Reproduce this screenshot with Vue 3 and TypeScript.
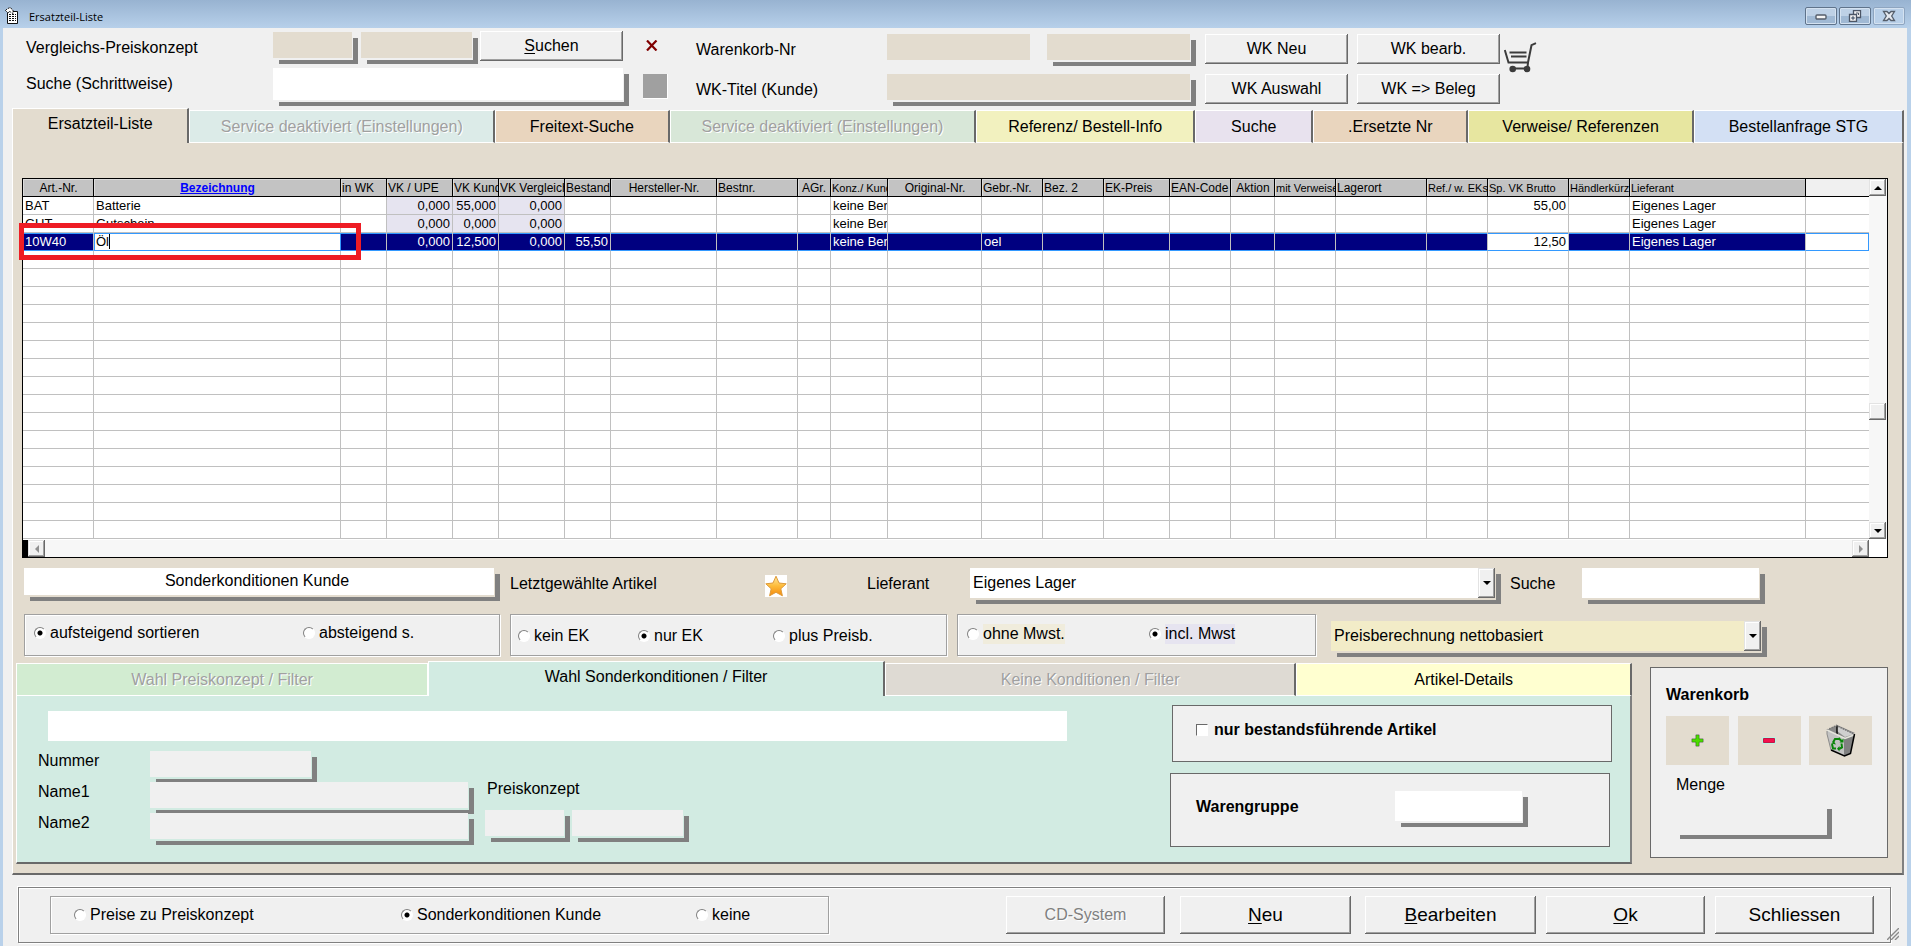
<script setup lang="ts">
import { ref } from 'vue'

interface Tab {
  label: string
  share: number
  tone: string
  disabled?: boolean
  active?: boolean
}

interface Column {
  key: string
  label: string
  width: number
  align?: 'center' | 'right' | 'left'
  cell?: 'right' | 'left'
  small?: boolean
  tint?: boolean
}

type Row = Record<string, string>

const mainTabs: Tab[] = [
  { label: 'Ersatzteil-Liste', share: 177, tone: 'sand', active: true },
  { label: 'Service deaktiviert (Einstellungen)', share: 307, tone: 'aqua', disabled: true },
  { label: 'Freitext-Suche', share: 174, tone: 'peach' },
  { label: 'Service deaktiviert (Einstellungen)', share: 308, tone: 'sage', disabled: true },
  { label: 'Referenz/ Bestell-Info', share: 219, tone: 'lemon' },
  { label: 'Suche', share: 117, tone: 'lilac' },
  { label: '.Ersetzte Nr', share: 154, tone: 'peach' },
  { label: 'Verweise/ Referenzen', share: 226, tone: 'olive' },
  { label: 'Bestellanfrage STG', share: 210, tone: 'sky' },
]

const filterTabs: Tab[] = [
  { label: 'Wahl Preiskonzept / Filter', share: 413, tone: 'green', disabled: true },
  { label: 'Wahl Sonderkonditionen / Filter', share: 457, tone: 'mint', active: true },
  { label: 'Keine Konditionen / Filter', share: 411, tone: 'grey', disabled: true },
  { label: 'Artikel-Details', share: 335, tone: 'yellow' },
]

const columns: Column[] = [
  { key: 'artnr', label: 'Art.-Nr.', width: 71, align: 'center' },
  { key: 'bez', label: 'Bezeichnung', width: 247, align: 'center' },
  { key: 'wk', label: 'in WK', width: 46 },
  { key: 'upe', label: 'VK / UPE', width: 66, cell: 'right', tint: true },
  { key: 'kunde', label: 'VK Kunde', width: 46, cell: 'right', tint: true },
  { key: 'vergl', label: 'VK Vergleich', width: 66, cell: 'right', tint: true },
  { key: 'bestand', label: 'Bestand', width: 46, cell: 'right' },
  { key: 'herst', label: 'Hersteller-Nr.', width: 106, align: 'center' },
  { key: 'bestnr', label: 'Bestnr.', width: 81 },
  { key: 'agr', label: 'AGr.', width: 33, align: 'right' },
  { key: 'konz', label: 'Konz./ Kunde', width: 57, small: true },
  { key: 'orig', label: 'Original-Nr.', width: 94, align: 'center' },
  { key: 'gebr', label: 'Gebr.-Nr.', width: 61 },
  { key: 'bez2', label: 'Bez. 2', width: 61 },
  { key: 'ek', label: 'EK-Preis', width: 66 },
  { key: 'ean', label: 'EAN-Code', width: 61 },
  { key: 'aktion', label: 'Aktion', width: 44, align: 'center' },
  { key: 'verw', label: 'mit Verweisen', width: 61, small: true },
  { key: 'ort', label: 'Lagerort', width: 91 },
  { key: 'ref', label: 'Ref./ w. EKs', width: 61, small: true },
  { key: 'brutto', label: 'Sp. VK Brutto', width: 81, cell: 'right', small: true },
  { key: 'haendler', label: 'Händlerkürzel', width: 61, small: true },
  { key: 'lief', label: 'Lieferant', width: 176, small: true },
]

const rows: Row[] = [
  { artnr: 'BAT', bez: 'Batterie', upe: '0,000', kunde: '55,000', vergl: '0,000', konz: 'keine Ber', brutto: '55,00', lief: 'Eigenes Lager' },
  { artnr: 'GUT', bez: 'Gutschein', upe: '0,000', kunde: '0,000', vergl: '0,000', konz: 'keine Ber', lief: 'Eigenes Lager' },
  { artnr: '10W40', bez: 'Öl', upe: '0,000', kunde: '12,500', vergl: '0,000', bestand: '55,50', konz: 'keine Ber', gebr: 'oel', brutto: '12,50', lief: 'Eigenes Lager' },
]
const selectedRow = 2
const emptyRows = 16

const editText = ref('Öl')
const sortOrder = ref('auf')
const ekMode = ref('nur')
const mwst = ref('incl')
const priceMode = ref('sonder')
const stockOnly = ref(false)
</script>

<template>
  <div class="window">
    <header class="titlebar">
      <svg class="app-icon" width="14" height="18" viewBox="0 0 14 18" aria-hidden="true">
        <path d="M2.500 5.500V4.500h10v12h-10z" fill="#fff" stroke="#111" />
        <path d="M4 7.500h7M4 9.500h7M4 11.500h7M4 13.500h7" stroke="#111" stroke-dasharray="2 1" />
        <path d="M.5 3.500 2 2l3-1.500L8 3v3.500L5.500 5 4 4.500 3 6z" fill="#fff" stroke="#111" stroke-dasharray="2 1" />
      </svg>
      <h1>Ersatzteil-Liste</h1>
      <div class="caption">
        <button type="button" aria-label="Minimieren">
          <svg width="14" height="12" viewBox="0 0 14 12"><rect x="2" y="5" width="10" height="4" rx="1" fill="#f4f4f4" stroke="#555e6b" stroke-width="1.400" /></svg>
        </button>
        <button type="button" aria-label="Wiederherstellen">
          <svg width="14" height="12" viewBox="0 0 14 12"><path d="M5.500.500h7v7h-7z" fill="#f4f4f4" stroke="#4c5666" stroke-width="1.300" /><path d="M8 3h2.500v2" fill="none" stroke="#4c5666" /><path d="M1.500 4.500h7v7h-7z" fill="#f4f4f4" stroke="#4c5666" stroke-width="1.300" /><path d="M4 7h2v2H4z" fill="#9db5cf" stroke="#4c5666" /></svg>
        </button>
        <button type="button" class="pale" aria-label="Fenster schließen">
          <svg width="14" height="12" viewBox="0 0 14 12"><path d="M1.500 1.500h3.500l2 2 2-2h3.500L9.700 6l2.800 4.500H9l-2-2-2 2H1.500L4.300 6z" fill="#e4e8ee" stroke="#555e6b" stroke-width="1.300" /></svg>
        </button>
      </div>
    </header>

    <main class="client">
      <section class="top">
        <div class="top-labels first">
          <label for="vpk">Vergleichs-Preiskonzept</label>
          <label for="step">Suche (Schrittweise)</label>
        </div>
        <div class="search-block">
          <div class="line">
            <input id="vpk" class="field sand w79" />
            <input class="field sand w111" aria-label="Bezeichnung Preiskonzept" />
            <button type="button" class="btn w143"><span><u>S</u>uchen</span></button>
          </div>
          <input id="step" class="field white tall" />
        </div>
        <div class="marks">
          <button type="button" class="clear" aria-label="Leeren">
            <svg width="12" height="11" viewBox="0 0 12 11"><path d="M1 0.500 10.500 10.500M10.500 0.500 1 10.500" stroke="#800000" stroke-width="2.200" /></svg>
          </button>
          <button type="button" class="swatch" aria-label="Anzeige"></button>
        </div>
        <div class="top-labels second">
          <label for="wknr">Warenkorb-Nr</label>
          <label for="wktitel">WK-Titel (Kunde)</label>
        </div>
        <div class="basket-fields">
          <div class="line">
            <input id="wknr" class="field sand flat w143" />
            <input class="field sand w143" aria-label="Warenkorb-Datum" />
          </div>
          <input id="wktitel" class="field sand wide" />
        </div>
        <div class="basket-buttons">
          <button type="button" class="btn">WK Neu</button>
          <button type="button" class="btn">WK bearb.</button>
          <button type="button" class="btn">WK Auswahl</button>
          <button type="button" class="btn">WK =&gt; Beleg</button>
        </div>
        <svg class="cart" width="33" height="31" viewBox="0 0 33 31" role="img" aria-label="Warenkorb">
          <path d="M.8 8 4.500 20.500H25M32 1.200l-4.500 2L24 20.500l-.500 5" fill="none" stroke="#3b3b3b" stroke-width="2" />
          <path d="M5.500 10.500h17M7 14.500h15.500M8 26.500h16" stroke="#3b3b3b" stroke-width="1.800" />
          <circle cx="8.700" cy="27" r="3.300" fill="#3b3b3b" /><circle cx="23" cy="27" r="3.300" fill="#3b3b3b" />
        </svg>
      </section>

      <nav class="tabs" role="tablist" aria-label="Ansichten">
        <button
          v-for="(t, i) in mainTabs"
          :key="i"
          type="button"
          role="tab"
          :class="['tab', t.tone, { active: t.active }]"
          :disabled="t.disabled"
          :aria-selected="!!t.active"
          :style="{ flexGrow: t.share }"
        >{{ t.label }}</button>
      </nav>

      <section class="page">
        <div class="grid">
          <div class="grid-body">
            <table>
              <colgroup>
                <col v-for="c in columns" :key="c.key" :style="{ width: c.width + 'px' }" />
                <col />
              </colgroup>
              <thead>
                <tr>
                  <th v-for="c in columns" :key="c.key" scope="col" :class="[c.align, { small: c.small }]">
                    <a v-if="c.key === 'bez'" href="#">{{ c.label }}</a>
                    <template v-else>{{ c.label }}</template>
                  </th>
                  <td class="rest"></td>
                </tr>
              </thead>
              <tbody>
                <tr v-for="(r, i) in rows" :key="r.artnr" :class="{ selected: i === selectedRow }">
                  <td
                    v-for="c in columns"
                    :key="c.key"
                    :class="[c.cell, { tint: c.tint, open: c.key === 'brutto', editing: i === selectedRow && c.key === 'bez' }]"
                  >
                    <span v-if="i === selectedRow && c.key === 'bez'" class="edit"><input v-model="editText" aria-label="Bezeichnung" /><i class="caret"></i></span>
                    <template v-else>{{ r[c.key] }}</template>
                  </td>
                  <td class="rest"></td>
                </tr>
                <tr v-for="n in emptyRows" :key="n">
                  <td v-for="c in columns" :key="c.key"></td>
                  <td class="rest"></td>
                </tr>
              </tbody>
            </table>
            <div class="vbar">
              <button type="button" class="sb" aria-label="Nach oben"><svg width="8" height="4" viewBox="0 0 8 4"><path d="M0 4 4 0l4 4z" /></svg></button>
              <span class="track-a"></span>
              <span class="sb thumb"></span>
              <span class="track-b"></span>
              <button type="button" class="sb" aria-label="Nach unten"><svg width="8" height="4" viewBox="0 0 8 4"><path d="M0 0h8L4 4z" /></svg></button>
            </div>
          </div>
          <div class="hbar">
            <span class="block"></span>
            <button type="button" class="sb dim" aria-label="Nach links"><svg width="4" height="8" viewBox="0 0 4 8"><path d="M4 0v8L0 4z" /></svg></button>
            <span class="track"></span>
            <button type="button" class="sb dim" aria-label="Nach rechts"><svg width="4" height="8" viewBox="0 0 4 8"><path d="M0 0v8l4-4z" /></svg></button>
            <span class="corner"></span>
          </div>
          <div class="highlight"></div>
        </div>

        <div class="row picks">
          <input class="field white center special" value="Sonderkonditionen Kunde" aria-label="Konditionen" />
          <span class="cap last">Letztgewählte Artikel</span>
          <button type="button" class="star" aria-label="Letztgewählte Artikel">
            <svg width="22" height="22" viewBox="0 0 22 22">
              <defs><linearGradient id="gold" x1="0" y1="0" x2="0" y2="1"><stop offset="0" stop-color="#ffe9a0" /><stop offset=".5" stop-color="#fdbb3a" /><stop offset="1" stop-color="#f58a0c" /></linearGradient></defs>
              <path d="M11 1.200 14 8l7.200.8-5.400 5 1.600 7L11 17.300 4.600 20.800l1.600-7L.8 8.800 8 8z" fill="url(#gold)" stroke="#dd9a3a" stroke-linejoin="round" />
            </svg>
          </button>
          <label class="cap supplier" for="lief">Lieferant</label>
          <div class="combo white">
            <select id="lief"><option>Eigenes Lager</option></select>
            <span class="sb arrow"><svg width="8" height="4" viewBox="0 0 8 4"><path d="M0 0h8L4 4z" /></svg></span>
          </div>
          <label class="cap find" for="suche2">Suche</label>
          <input id="suche2" class="field white tall30" />
        </div>

        <div class="row groups">
          <fieldset class="group g1">
            <label><input v-model="sortOrder" type="radio" name="sort" value="auf" />aufsteigend sortieren</label>
            <label><input v-model="sortOrder" type="radio" name="sort" value="ab" />absteigend s.</label>
          </fieldset>
          <fieldset class="group g2">
            <label><input v-model="ekMode" type="radio" name="ek" value="kein" />kein EK</label>
            <label><input v-model="ekMode" type="radio" name="ek" value="nur" />nur EK</label>
            <label><input v-model="ekMode" type="radio" name="ek" value="plus" />plus Preisb.</label>
          </fieldset>
          <fieldset class="group g3">
            <label><input v-model="mwst" type="radio" name="mwst" value="ohne" /><span class="cream">ohne Mwst.</span></label>
            <label><input v-model="mwst" type="radio" name="mwst" value="incl" /><span class="violet">incl. Mwst</span></label>
          </fieldset>
          <div class="combo straw">
            <select aria-label="Preisberechnung"><option>Preisberechnung nettobasiert</option></select>
            <span class="sb arrow"><svg width="8" height="4" viewBox="0 0 8 4"><path d="M0 0h8L4 4z" /></svg></span>
          </div>
        </div>

        <div class="lower">
          <section class="filter">
            <nav class="tabs" role="tablist" aria-label="Filter">
              <button
                v-for="t in filterTabs"
                :key="t.label"
                type="button"
                role="tab"
                :class="['tab', t.tone, { active: t.active }]"
                :disabled="t.disabled"
                :aria-selected="!!t.active"
                :style="{ flexGrow: t.share }"
              >{{ t.label }}</button>
            </nav>
            <div class="filter-page">
              <div class="filter-left">
                <input class="field white flat long" aria-label="Filter" />
                <div class="filter-columns">
                  <div class="customer">
                    <label for="nummer">Nummer</label><input id="nummer" class="field plain w161" />
                    <label for="name1">Name1</label><input id="name1" class="field plain w318" />
                    <label for="name2">Name2</label><input id="name2" class="field plain w318" />
                  </div>
                  <div class="concept">
                    <label for="pk">Preiskonzept</label>
                    <div class="line">
                      <input id="pk" class="field plain w79" />
                      <input class="field plain w111" aria-label="Name Preiskonzept" />
                    </div>
                  </div>
                </div>
              </div>
              <div class="filter-right">
                <div class="box stock">
                  <label><input v-model="stockOnly" type="checkbox" />nur bestandsführende Artikel</label>
                </div>
                <div class="box goods">
                  <label for="wgr">Warengruppe</label>
                  <input id="wgr" class="field white w127" />
                </div>
              </div>
            </div>
          </section>

          <aside class="box basket">
            <h2>Warenkorb</h2>
            <div class="tools">
              <button type="button" aria-label="Hinzufügen">
                <svg width="13" height="13" viewBox="0 0 13 13"><path d="M4.500.500h4v4h4v4h-4v4h-4v-4h-4v-4h4z" fill="#4cdc00" stroke="#e6b5ec" /><path d="M5 1h3v4h4v3H8v4H5V8H1V5h4z" fill="#4cdc00" stroke="#3a9d0c" stroke-width=".8" /></svg>
              </button>
              <button type="button" aria-label="Entfernen">
                <svg width="14" height="7" viewBox="0 0 14 7"><path d="M0 0h14v7H0z" fill="#b9f3e2" /><path d="M1.500 1.500h11v4h-11z" fill="#f5104c" stroke="#c01848" /></svg>
              </button>
              <button type="button" aria-label="Warenkorb leeren">
                <svg width="30" height="33" viewBox="0 0 30 33">
                  <path d="M1 5v4l4 17 14 6V13z" fill="#c3c3c3" />
                  <path d="m18 14 11-4-5 20-6 2z" fill="#808080" />
                  <path d="M1 6 11 1l18 8-10 5z" fill="#8a8a8a" />
                  <path d="m11 2 17 8-9 3-8-6z" fill="#cfcfcf" />
                  <path d="M11 1.500v9" stroke="#000" stroke-width="1.400" />
                  <path d="m1 6 9.500-4.500L28 10" fill="none" stroke="#777" stroke-width="1.600" stroke-dasharray="1.500 1" />
                  <path d="m1 6 18 8.500 9-3.500" fill="none" stroke="#e4e4dc" stroke-width="1.600" />
                  <path d="M1 7v3l4 16" fill="none" stroke="#8a8a8a" />
                  <path d="m28.500 10-4 19.500-6 2.500L5 26" fill="none" stroke="#000" stroke-width="1.500" />
                  <path d="M7 18.500 9 15h4M12.500 14l3.500 3.500M15.500 19.500l.500 4-3 1.500M6 20l1 4.500h3" fill="none" stroke="#0a850a" stroke-width="2" />
                  <path d="m5 19.500 3-2 2 3zM17.500 14.500v4h-4zM13.500 22v5.500L11 24.800z" fill="#0a850a" />
                </svg>
              </button>
            </div>
            <label for="menge">Menge</label>
            <input id="menge" class="field plain w152" />
          </aside>
        </div>
      </section>

      <footer class="bottom">
        <fieldset class="group modes">
          <label><input v-model="priceMode" type="radio" name="mode" value="preise" />Preise zu Preiskonzept</label>
          <label><input v-model="priceMode" type="radio" name="mode" value="sonder" />Sonderkonditionen Kunde</label>
          <label><input v-model="priceMode" type="radio" name="mode" value="keine" />keine</label>
        </fieldset>
        <div class="actions">
          <button type="button" class="btn a1" disabled>CD-System</button>
          <button type="button" class="btn a2"><span><u>N</u>eu</span></button>
          <button type="button" class="btn a3"><span><u>B</u>earbeiten</span></button>
          <button type="button" class="btn a4"><span><u>O</u>k</span></button>
          <button type="button" class="btn a5">Schliessen</button>
        </div>
        <svg class="grip" width="12" height="12" viewBox="0 0 12 12" aria-hidden="true"><path d="M0 12 12 0M4 12l8-8M8 12l4-4" stroke="#8a8a8a" stroke-width="1.400" /></svg>
      </footer>
    </main>
  </div>
</template>

<style>
html, body { margin: 0; background: #f0f0f0; }
</style>

<style scoped>
* { box-sizing: border-box; }
.window {
  min-height: 100vh;
  background: #b9d1ea;
  padding: 0 4px 0 3px;
  color: #000;
  font: 16px/20px "Liberation Sans", Arial, sans-serif;
  overflow: hidden;
}
button, input, select { font: inherit; color: inherit; margin: 0; border-radius: 0; }
button { padding: 0; cursor: default; }
fieldset { margin: 0; min-width: 0; }
h1, h2 { margin: 0; }

.titlebar {
  display: flex;
  align-items: center;
  height: 28px;
  margin: 0 -4px 0 -3px;
  padding: 0 6px 0 5px;
  background: linear-gradient(#98b3d1, #b7d0ea);
}
.titlebar h1 { margin-left: 10px; padding-top: 5px; font: 11px/16px "Open Sans", "Noto Sans", sans-serif; }
.app-icon { margin-top: 4px; }
.caption { display: flex; gap: 2px; margin-left: auto; padding-top: 4px; }
.caption button {
  display: grid;
  place-items: center;
  width: 32px;
  height: 18px;
  border: 1px solid #5f738b;
  border-radius: 2px;
  background: linear-gradient(#bed1e6 50%, #a0b9d4 50%);
  box-shadow: inset 0 0 0 1px #d4e2f1;
}
.caption .pale { border-color: #8ea5c0; background: #b9d0e9; }

.client { display: flex; flex-direction: column; background: #f0f0f0; min-height: calc(100vh - 28px); }

/* Header */
.top { display: flex; align-items: flex-start; height: 80px; padding: 3px 0 0 23px; --surface: #f0f0f0; }
.top-labels { display: flex; flex-direction: column; }
.first { width: 247px; gap: 16px; padding-top: 7px; }
.second { width: 191px; gap: 20px; padding-top: 9px; }
.line { display: flex; }
.search-block { display: flex; flex-direction: column; width: 350px; padding-top: 1px; gap: 7px; }
.search-block .line { height: 29px; }
.search-block .line .field + .field { margin-left: 9px; }
.search-block .btn { margin: -1px 0 0 8px; }
.marks { display: flex; flex-direction: column; width: 73px; padding: 9px 0 0 20px; gap: 23px; }
.clear { display: flex; width: 14px; height: 11px; margin-left: 3px; border: 0; background: none; }
.swatch { width: 25px; height: 25px; border: 0; border-right: 1px solid #fff; border-bottom: 1px solid #fff; background: #a0a0a0; }
.basket-fields { display: flex; flex-direction: column; width: 303px; gap: 14px; padding-top: 3px; }
.basket-fields .line { justify-content: space-between; }
.basket-buttons { display: grid; grid-template-columns: 143px 143px; gap: 10px 9px; margin-left: 15px; padding-top: 3px; }
.cart { margin: 11px 0 0 4px; }

.field {
  display: block;
  flex: none;
  height: 26px;
  padding: 0 4px;
  border: 0;
  outline: 0;
  box-shadow: 1px 2px 0 var(--surface), 6px 6px 0 #808080;
}
.field.flat { box-shadow: none; }
.field.sand { background: #e3dccf; }
.field.white { background: #fff; }
.field.plain { background: #f0f0f0; }
.field.center { text-align: center; }
.field.tall { width: 350px; height: 32px; }
.field.wide { width: 303px; }
.w79 { width: 79px; }
.w111 { width: 111px; }
.w127 { width: 127px; }
.w143 { width: 143px; }
.w152 { width: 152px; }
.w161 { width: 161px; }
.w318 { width: 318px; }

.btn {
  height: 30px;
  border: 0;
  background: #f0f0f0;
  box-shadow: inset -1px -1px #696969, inset 1px 1px #fff, inset -2px -2px #a0a0a0;
}
u { text-underline-offset: 2px; }

/* Tabs */
.tabs { display: flex; align-items: flex-end; height: 35px; }
.client > .tabs { margin: 0 3px 0 9px; }
.tab {
  flex: 1 1 0;
  min-width: 0;
  height: 33px;
  border: solid;
  border-width: 1px 2px 1px 1px;
  border-color: #fff #696969 #fff #fff;
  white-space: nowrap;
  overflow: hidden;
}
.tab.active { height: 35px; border-bottom: 0; padding-bottom: 4px; }
.tab:disabled { color: #a0a0a0; text-shadow: 1px 1px #fff; }
.sand { background: #e3dccf; }
.aqua { background: #dcebe8; }
.peach { background: #e9d5be; }
.sage { background: #d8e7d8; }
.lemon { background: #f2f1bf; }
.lilac { background: #e8e2ee; }
.olive { background: #e7e6a0; }
.sky { background: #d3e0f4; }
.green { background: #d2ecd1; }
.mint { background: #d2ebe2; }
.grey { background: #dedad3; }
.yellow { background: #ffffd0; }
.tab.green { border-right: 1px solid #fff; }

.page {
  margin: 0 3px 0 9px;
  padding: 35px 14px 9px 3px;
  background: #e3dccf;
  border: solid;
  border-width: 0 2px 2px 1px;
  border-color: #fff #808080 #696969 #fff;
  --surface: #e3dccf;
}

/* Article grid */
.grid { position: relative; margin-left: 6px; border: 1px solid #000; background: #fff; }
.grid-body { display: flex; padding-bottom: 1px; }
table { flex: 1; width: 0; table-layout: fixed; border-collapse: separate; border-spacing: 0; font-size: 13px; line-height: 17px; }
th, td { height: 18px; padding: 0 2px; overflow: hidden; white-space: nowrap; text-align: left; }
th {
  border-right: 1px solid #000;
  border-bottom: 1px solid #000;
  background: #c3c3c3;
  box-shadow: inset 1px 1px #dcdcdc;
  font-size: 12px;
  font-weight: normal;
  padding: 1px 0 0 1px;
  line-height: 16px;
}
th.small { font-size: 11px; }
th.center { text-align: center; }
th.right { text-align: right; padding-right: 4px; }
th a { color: #00f; font-weight: bold; }
td { border-right: 1px solid #c0c0c0; border-bottom: 1px solid #c0c0c0; }
td.right { text-align: right; }
td.rest { border-right: 0; }
thead .rest { background: #f0f0f0; border-bottom-color: #000; }
.tint { background: #e6e4f0; }
.selected td { background: #000080; color: #fff; border-bottom-color: #3399ff; box-shadow: inset 0 1px #3399ff; }
.selected td.open, .selected td.rest { background: #fff; color: #000; }
.selected td.rest { box-shadow: inset -1px 1px #3399ff; }
.selected td.editing { background: #fff; color: #000; border-right-color: #3399ff; box-shadow: inset 1px 1px #3399ff; }
.edit { display: flex; align-items: center; height: 17px; }
.edit input { field-sizing: content; padding: 0; border: 0; outline: 0; background: none; height: 15px; }
.caret { width: 1px; height: 15px; background: #000; }

.vbar { display: flex; flex-direction: column; width: 18px; background: #f7f7f7; }
.track-a { flex: 208; }
.track-b { flex: 103; }
.sb {
  display: grid;
  place-items: center;
  flex: none;
  width: 17px;
  height: 17px;
  border: 0;
  background: #f0f0f0;
  box-shadow: inset -1px -1px #696969, inset 1px 1px #e3e3e3, inset -2px -2px #a0a0a0, inset 2px 2px #fff;
}
.dim { fill: #909090; }
.hbar { display: flex; height: 17px; background: #f7f7f7; }
.block { width: 5px; background: #000; }
.track { flex: 1; }
.corner { width: 18px; background: #fff; }
.highlight { position: absolute; left: -4px; top: 44px; width: 342px; height: 37px; border: 5px solid #ee1c24; }

/* Selection rows */
.row { display: flex; align-items: flex-start; padding-left: 8px; }
.picks { margin-top: 10px; height: 36px; }
.special { width: 470px; height: 27px; padding: 0 8px 2px 4px; }
.cap { padding-top: 6px; white-space: nowrap; }
.last { width: 255px; margin-left: 16px; }
.star { display: flex; width: 22px; height: 22px; margin-top: 7px; border: 0; background: #fff; }
.supplier { width: 103px; margin-left: 80px; }
.find { width: 72px; margin-left: 15px; }
.tall30 { width: 177px; height: 30px; }
.combo {
  display: flex;
  position: relative;
  flex: none;
  height: 30px;
  box-shadow: 1px 2px 0 var(--surface), 6px 6px 0 #808080;
}
.combo.white { width: 525px; background: #fff; }
.combo.straw { width: 430px; margin: 7px 0 0 5px; background: #f2ecc8; }
.combo select { flex: 1; padding: 0 20px 0 3px; border: 0; outline: 0; background: none; appearance: none; }
.combo .arrow { position: absolute; right: 0; top: 0; height: 30px; pointer-events: none; }

.groups { margin-top: 10px; height: 47px; gap: 10px; }
.group {
  display: flex;
  align-items: flex-start;
  flex: none;
  height: 42px;
  padding: 0;
  border: 1px solid #a0a0a0;
  background: #f0f0f0;
  box-shadow: inset 1px 1px #fff, 1px 1px #fff;
}
.group label { display: flex; align-items: center; gap: 4px; white-space: nowrap; }
input[type='radio'] {
  appearance: none;
  width: 12px;
  height: 12px;
  border: 1px solid;
  border-color: #808080 #fff #fff #808080;
  border-radius: 50%;
  background: #fff;
}
input[type='radio']:checked { background: radial-gradient(circle, #000 2px, #fff 3px); }
.g1 { width: 476px; padding: 8px 0 0 9px; }
.g1 label:first-child { width: 269px; }
.g2 { width: 437px; padding: 11px 0 0 7px; }
.g2 label:nth-child(1) { width: 120px; }
.g2 label:nth-child(2) { width: 135px; }
.g3 { width: 359px; padding: 9px 0 0 9px; }
.g3 label:first-child { width: 182px; }
.cream { background: #f0ecdc; }
.violet { background: #e6e4f0; }

/* Filter panel */
.lower { display: flex; align-items: flex-start; gap: 18px; }
.filter { flex: 1; display: flex; flex-direction: column; min-height: 203px; }
.filter-page {
  flex: 1;
  display: flex;
  justify-content: space-between;
  padding-top: 15px;
  background: #d2ebe2;
  border: solid;
  border-width: 0 2px 2px 1px;
  border-color: #fff #808080 #696969 #fff;
  --surface: #d2ebe2;
}
.filter-left { padding-left: 21px; }
.long { width: 1019px; height: 30px; margin-left: 10px; }
.filter-columns { display: flex; padding-top: 10px; }
.customer { display: grid; grid-template-columns: 112px 318px; row-gap: 5px; width: 447px; }
.concept { padding-top: 28px; }
.concept label { margin-left: 2px; }
.concept .line { gap: 8px; padding-top: 11px; }
.filter-right { display: flex; flex-direction: column; width: 460px; padding-top: 9px; margin-top: -15px; gap: 11px; font-weight: bold; }
.box { border: 1px solid #696969; background: #f0f0f0; --surface: #f0f0f0; }
.stock { width: 440px; height: 57px; margin-left: 2px; padding: 14px 0 0 23px; }
.stock label { display: flex; align-items: center; gap: 6px; }
input[type='checkbox'] {
  appearance: none;
  width: 12px;
  height: 12px;
  border: 1px solid;
  border-color: #696969 #fff #fff #696969;
  background: #fff;
}
.goods { display: flex; width: 440px; height: 74px; padding: 17px 0 0 25px; }
.goods label { width: 199px; padding-top: 6px; }
.goods .field { height: 30px; }

.basket { width: 238px; height: 191px; margin-top: 6px; padding: 17px 15px 0; }
.basket h2 { font-size: 16px; line-height: 20px; }
.tools { display: flex; justify-content: space-between; margin: 11px 0 10px; }
.tools button { display: grid; place-items: center; width: 63px; height: 49px; border: 0; background: #e3dccf; }
.basket label { display: block; margin-left: 10px; }
.basket .field { height: 30px; margin: 8px 0 0 8px; }

/* Footer */
.bottom {
  position: relative;
  display: flex;
  justify-content: space-between;
  align-items: flex-start;
  height: 56px;
  margin: 12px 16px 0 15px;
  padding: 8px 16px 0 31px;
  border: 1px solid #808080;
  box-shadow: -1px -1px #fff, inset 1px 1px #fff, 1px 1px #fff;
}
.modes { width: 779px; height: 38px; padding: 8px 0 0 23px; }
.modes label:nth-child(1) { width: 327px; }
.modes label:nth-child(2) { width: 295px; }
.actions { display: flex; }
.actions .btn { height: 38px; font-size: 19px; }
.actions .a1 { width: 159px; font-size: 16px; color: #808080; text-shadow: 1px 1px #fff; }
.actions .a2 { width: 171px; margin-left: 15px; }
.actions .a3 { width: 171px; margin-left: 14px; }
.actions .a4 { width: 159px; margin-left: 10px; }
.actions .a5 { width: 159px; margin-left: 10px; }
.grip { position: absolute; right: -9px; bottom: 2px; }
</style>
